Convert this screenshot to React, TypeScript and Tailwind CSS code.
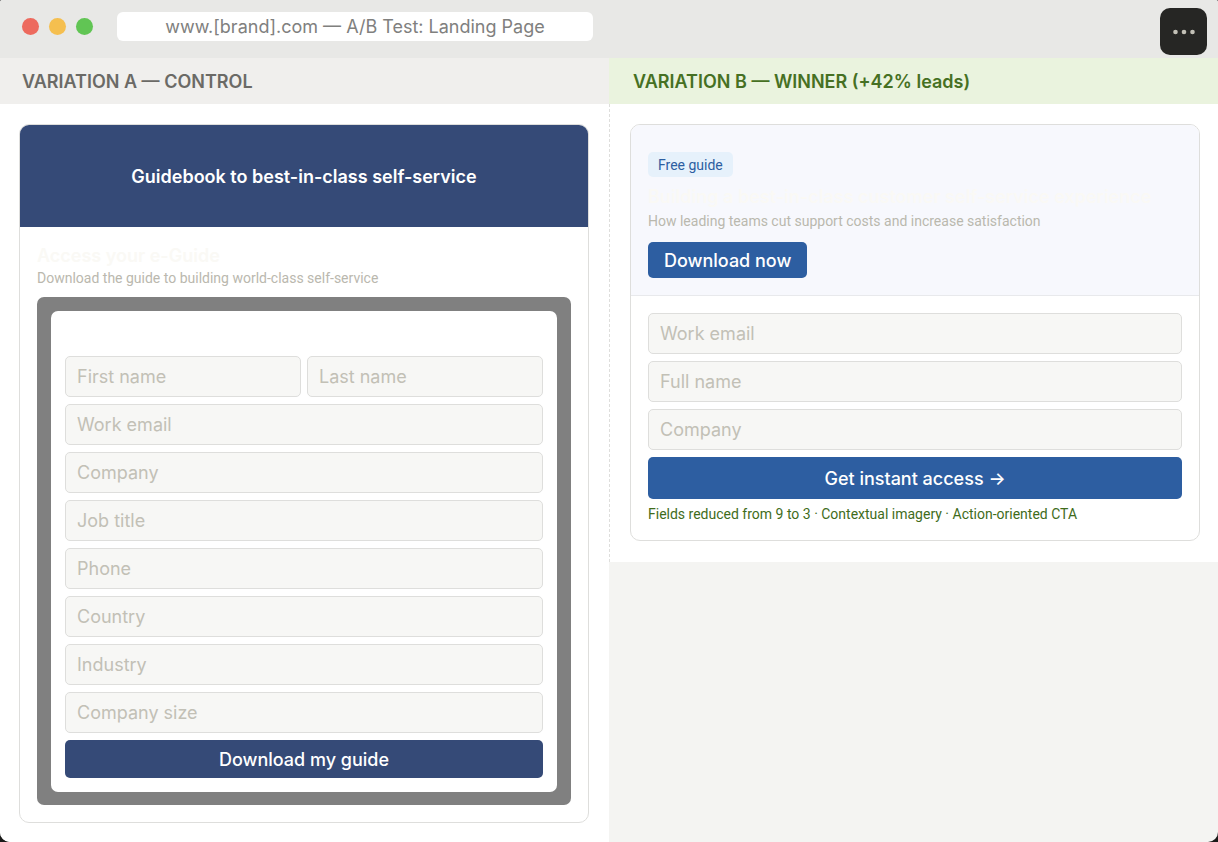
import type { ReactNode } from 'react'

const namesA = ['First name', 'Last name']
const fieldsA = ['Work email', 'Company', 'Job title', 'Phone', 'Country', 'Industry', 'Company size']
const fieldsB = ['Work email', 'Full name', 'Company']

function Field({ label }: { label: string }) {
    return (
        <input
            type="text"
            aria-label={label}
            placeholder={label}
            className="w-full min-w-0 h-[41px] px-[11px] rounded-[5px] border border-[#dededc] bg-[#f7f7f5] text-lg text-[#5f5e5a] placeholder:text-[#c2c0b6] outline-none"
        />
    )
}

function Subtitle({ children }: { children: ReactNode }) {
    return <p className="font-[Roboto,sans-serif] text-sm leading-5 text-[#bab8ae]">{children}</p>
}

function TitleBar() {
    return (
        <header className="relative flex items-start bg-[#e8e8e6] pt-3 pb-[17px] pl-[22px]">
            <div className="flex gap-[10px] pt-[6px]">
                <span className="size-[17px] rounded-full bg-[#ed6a5e]" />
                <span className="size-[17px] rounded-full bg-[#f5bf4f]" />
                <span className="size-[17px] rounded-full bg-[#61c554]" />
            </div>
            <input
                type="text"
                readOnly
                aria-label="Address"
                value="www.[brand].com — A/B Test: Landing Page"
                className="ml-6 flex-1 max-w-[476px] h-[29px] rounded-md bg-white text-center text-lg text-[#80807e] outline-none"
            />
            <button
                type="button"
                aria-label="More options"
                className="absolute top-2 right-[11px] size-[47px] rounded-[10px] bg-[#262624] flex items-center justify-center"
            >
                <svg width="24" height="6" viewBox="0 0 24 6" fill="#c2c0b6">
                    <circle cx="3.5" cy="3" r="2.3" />
                    <circle cx="12" cy="3" r="2.3" />
                    <circle cx="20.5" cy="3" r="2.3" />
                </svg>
            </button>
        </header>
    )
}

function VariationA() {
    return (
        <section className="flex flex-col">
            <h2 className="h-[46px] pt-0.5 flex items-center px-[22px] bg-[#f0efed] text-lg font-semibold text-[#6b6a66]">
                VARIATION A — CONTROL
            </h2>
            <div className="flex-1 bg-white pt-5 pb-[19px] pl-[19px] pr-5">
                <div className="rounded-[10px] border border-[#dededc] overflow-hidden">
                    <div className="h-[102px] pt-0.5 flex items-center justify-center bg-[#354a77]">
                        <h3 className="text-lg font-semibold text-white">Guidebook to best-in-class self-service</h3>
                    </div>
                    <div className="p-[17px]">
                        <h4 className="text-lg leading-6 font-semibold text-[#faf9f5]">Access your e-Guide</h4>
                        <Subtitle>Download the guide to building world-class self-service</Subtitle>

                        {/* Modal over a dimmed backdrop */}
                        <div className="mt-[9px] px-[14px] pt-[14px] pb-[13px] rounded-[7px] bg-[#808080]">
                            <form className="rounded-[7px] bg-white px-[14px] pt-[45px] pb-[14px] flex flex-col gap-[7px]">
                                <div className="grid grid-cols-2 gap-[6px]">
                                    {namesA.map(label => (
                                        <Field key={label} label={label} />
                                    ))}
                                </div>
                                {fieldsA.map(label => (
                                    <Field key={label} label={label} />
                                ))}
                                <button type="button" className="h-[38px] pt-0.5 rounded-[5px] bg-[#354a77] text-lg font-medium text-white">
                                    Download my guide
                                </button>
                            </form>
                        </div>
                    </div>
                </div>
            </div>
        </section>
    )
}

function VariationB() {
    return (
        <section>
            <h2 className="h-[46px] pt-0.5 flex items-center px-6 bg-[#eaf3de] text-lg font-semibold text-[#467023]">
                VARIATION B — WINNER (+42% leads)
            </h2>
            <div className="bg-white border-l border-dashed border-[#dededc] pt-5 pb-[21px] pl-5 pr-[18px]">
                <div className="rounded-[10px] border border-[#dededc] overflow-hidden">
                    <div className="flex flex-col items-start bg-[#f7f8fd] border-b border-[#e8e9ec] px-[17px] pt-[27px] pb-[17px]">
                        <span className="px-[10px] h-[25px] flex items-center rounded-[5px] bg-[#e6f1fb] font-[Roboto,sans-serif] text-sm text-[#2d5ea1]">
                            Free guide
                        </span>
                        <h3 className="mt-2 mb-[2px] text-lg leading-6 font-semibold text-[#faf9f5]">
                            Building a best-in-class customer self-service experience
                        </h3>
                        <Subtitle>How leading teams cut support costs and increase satisfaction</Subtitle>
                        <button type="button" className="mt-[11px] h-9 pt-0.5 px-4 rounded-[5px] bg-[#2d5ea1] text-lg font-medium text-white">
                            Download now
                        </button>
                    </div>
                    <div className="px-[17px] pt-[17px] pb-4">
                        <form className="flex flex-col gap-[7px]">
                            {fieldsB.map(label => (
                                <Field key={label} label={label} />
                            ))}
                            <button type="button" className="h-[42px] pt-0.5 rounded-[5px] bg-[#2d5ea1] text-lg font-medium text-white">
                                Get instant access →
                            </button>
                        </form>
                        <p className="mt-[5px] font-[Roboto,sans-serif] text-sm leading-5 text-[#3f6c1b]">
                            Fields reduced from 9 to 3 · Contextual imagery · Action-oriented CTA
                        </p>
                    </div>
                </div>
            </div>
        </section>
    )
}

export default function App() {
    return (
        <div className="bg-[#1a1a19]">
            <main className="min-h-screen rounded-t-[2px] rounded-b-[10px] overflow-hidden bg-[#f4f4f2] font-[Inter,sans-serif]">
                <TitleBar />
                <div className="grid grid-cols-2">
                    <VariationA />
                    <VariationB />
                </div>
            </main>
        </div>
    )
}
